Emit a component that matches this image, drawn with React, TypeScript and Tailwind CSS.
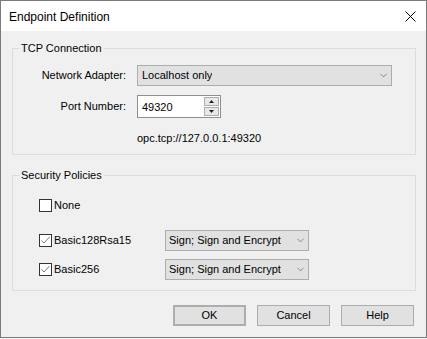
import { ChevronDown } from "lucide-react";

function Select({ value, className }: { value: string; className: string }) {
  return (
    <div
      className={`flex items-center justify-between border border-[#adadad] bg-[#e1e1e1] h-[21px] ${className}`}
    >
      <span className="truncate">{value}</span>
      <ChevronDown size={11} strokeWidth={1.25} className="text-[#444] mr-[2px] shrink-0" />
    </div>
  );
}

function CheckBox({ checked, label }: { checked: boolean; label: string }) {
  return (
    <label className="flex items-center w-[126px] h-[21px]">
      <span className="w-[13px] h-[13px] border border-[#333] bg-white flex items-center justify-center shrink-0">
        {checked && (
          <svg width="11" height="11" viewBox="0 0 11 11">
            <path d="M1.5 5.5 L4 8 L9.5 2" fill="none" stroke="#6a6a6a" strokeWidth="0.9" />
          </svg>
        )}
      </span>
      <span className="ml-[2px]">{label}</span>
    </label>
  );
}

export default function App() {
  const groupCls = "border border-[#dcdcdc] ml-[11px] w-[404px]";
  const legendCls = "ml-[6px] px-[2px] leading-[13px]";
  const btnCls = "w-[73px] h-[21px] bg-[#e1e1e1] border border-[#adadad] flex items-center justify-center";

  return (
    <div className="w-[427px] h-[339px] bg-[#f7f7f7] text-[11px] text-black font-['Liberation_Sans',Arial,sans-serif]">
      <div className="w-[427px] h-[338px] border border-[#7a7a7a] flex flex-col bg-[#f0f0f0]">
        <div className="h-[30px] bg-white flex items-center justify-between pl-[8px] pr-[10px] shrink-0">
          <span className="text-[12px] leading-none pt-[1px]">Endpoint Definition</span>
          <svg width="11" height="11" viewBox="0 0 11 11" className="mt-[1px]">
            <path d="M0.5 0.5 L10.5 10.5 M10.5 0.5 L0.5 10.5" stroke="#000" strokeWidth="1" />
          </svg>
        </div>

        <fieldset className={`${groupCls} mt-[11px] pb-[9px]`}>
          <legend className={legendCls}>TCP Connection</legend>
          <div className="flex items-center gap-[11px] mt-[10px]">
            <span className="w-[113px] text-right">Network Adapter:</span>
            <Select value="Localhost only" className="w-[255px] pl-[4px]" />
          </div>
          <div className="flex items-center gap-[11px] mt-[9px]">
            <span className="w-[113px] text-right">Port Number:</span>
            <div className="flex w-[84px] h-[23px] border border-[#8f8f8f] bg-white">
              <span className="flex-1 pl-[4px] pt-[3px]">49320</span>
              <div className="flex flex-col w-[17px] p-[1px] gap-[1px]">
                <div className="flex-1 border border-[#adadad] bg-[#e8e8e8] flex items-center justify-center">
                  <svg width="5" height="3" viewBox="0 0 5 3"><path d="M2.5 0 L5 3 L0 3 Z" fill="#222" /></svg>
                </div>
                <div className="flex-1 border border-[#adadad] bg-[#e8e8e8] flex items-center justify-center">
                  <svg width="5" height="3" viewBox="0 0 5 3"><path d="M0 0 L5 0 L2.5 3 Z" fill="#222" /></svg>
                </div>
              </div>
            </div>
          </div>
          <div className="pl-[124px] mt-[14px] leading-[13px]">opc.tcp://127.0.0.1:49320</div>
        </fieldset>

        <fieldset className={`${groupCls} mt-[14px] pb-[10px]`}>
          <legend className={legendCls}>Security Policies</legend>
          <div className="pl-[26px]">
            <div className="flex items-center mt-[13px]">
              <CheckBox checked={false} label="None" />
            </div>
            <div className="flex items-center mt-[14px]">
              <CheckBox checked label="Basic128Rsa15" />
              <Select value="Sign; Sign and Encrypt" className="w-[144px] pl-[3px]" />
            </div>
            <div className="flex items-center mt-[8px]">
              <CheckBox checked label="Basic256" />
              <Select value="Sign; Sign and Encrypt" className="w-[144px] pl-[3px]" />
            </div>
          </div>
        </fieldset>

        <div className="flex justify-end gap-[11px] pr-[12px] mt-[14px]">
          <button className={`${btnCls} border-2 border-[#0078d7]`}>OK</button>
          <button className={btnCls}>Cancel</button>
          <button className={btnCls}>Help</button>
        </div>
      </div>
    </div>
  );
}
